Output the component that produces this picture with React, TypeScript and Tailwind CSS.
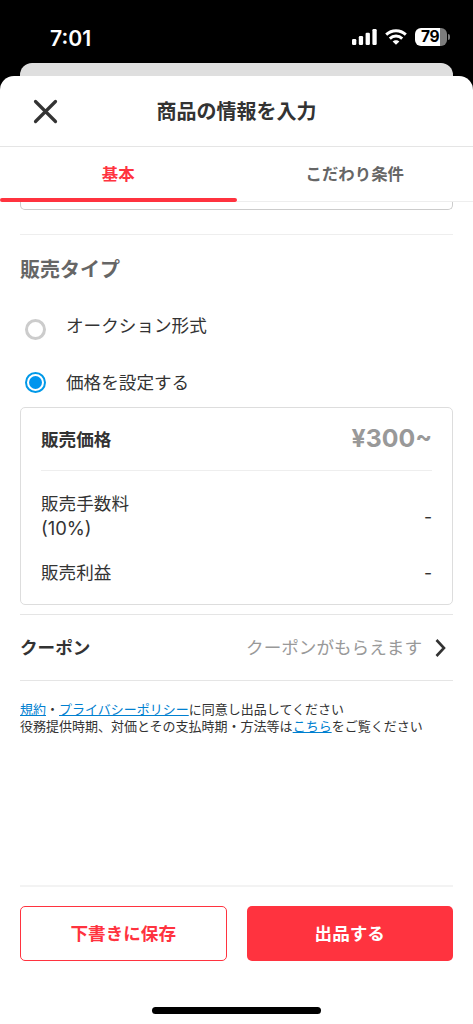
import React, { useState } from 'react';

type SaleType = 'auction' | 'fixed';

interface RadioProps {
  label: string;
  checked: boolean;
  onSelect: () => void;
  labelClass?: string;
}

function StatusBar() {
  return (
    <div className="flex h-[63px] items-center justify-between pl-[50px] pr-[23px] pt-[11px] text-white">
      <span className="pt-0.5 font-[Inter] text-[21.2px] font-semibold leading-6">7:01</span>
      <div className="flex items-center">
        <svg width="25" height="16" viewBox="0 0 25 16" fill="currentColor">
          <rect x="0" y="10" width="4.3" height="6" rx="1.2" />
          <rect x="6.8" y="7" width="4.3" height="9" rx="1.2" />
          <rect x="13.6" y="3.7" width="4.3" height="12.3" rx="1.2" />
          <rect x="20.4" y="0" width="4.3" height="16" rx="1.2" />
        </svg>
        <svg className="ml-2" width="22" height="16" viewBox="0 0 22 16" fill="none" stroke="currentColor" strokeWidth="2.9">
          <path d="M1.2 5.6C6.7 .4 15.3 .4 20.8 5.6" />
          <path d="M4.8 9.6C8.3 6.2 13.7 6.2 17.2 9.6" />
          <path d="M11 15.8L7.6 12.6C9.5 10.8 12.500 10.8 14.4 12.6Z" fill="currentColor" stroke="none" />
        </svg>
        <div className="ml-2 flex h-[18px] w-8 items-center justify-center rounded-[6px] bg-linear-to-r from-white from-78% to-[#7d7d7d] to-78%">
          <span className="pr-0.5 font-[Inter] text-[15.5px] font-bold leading-none tracking-[-0.5px] text-black">79</span>
        </div>
        <span className="ml-px h-[6px] w-[2px] rounded-r-full bg-[#7d7d7d]" />
      </div>
    </div>
  );
}

function Radio({ label, checked, onSelect, labelClass = '' }: RadioProps) {
  return (
    <button type="button" onClick={onSelect} className="flex h-6 w-full items-center gap-5 pl-[5px] text-left">
      <span
        className={`flex size-[21px] shrink-0 items-center justify-center rounded-full border-solid ${
          checked ? 'border-2 border-[#0099e8]' : 'border-3 border-[#cccccc]'
        }`}
      >
        {checked && <span className="size-[13px] rounded-full bg-[#0095ee]" />}
      </span>
      <span className={`text-[17.6px] leading-6 ${labelClass}`}>{label}</span>
    </button>
  );
}

export default function App() {
  const [tab, setTab] = useState<'basic' | 'detail'>('basic');
  const [saleType, setSaleType] = useState<SaleType>('fixed');

  return (
    <div className="flex h-[1024px] w-[473px] flex-col overflow-hidden bg-black font-[Inter,'Noto_Sans_CJK_JP',sans-serif] text-[#333333]">
      <StatusBar />
      <div className="mx-5 h-[13px] shrink-0 rounded-t-[12px] bg-[#dfdfdf]" />

      <div className="flex min-h-0 flex-1 flex-col rounded-t-[14px] bg-white">
        <header className="grid h-[71px] shrink-0 grid-cols-[90px_1fr_90px] items-center border-b border-[#e5e5e5]">
          <button type="button" className="pl-[33px]">
            <svg width="25" height="25" viewBox="0 0 25 25" fill="none" stroke="#333333" strokeWidth="3.2" strokeLinecap="round">
              <path d="M2.5 2.5L22.5 22.5M22.5 2.5L2.5 22.5" />
            </svg>
          </button>
          <h1 className="pt-0.5 text-center text-[20px] font-bold">商品の情報を入力</h1>
        </header>

        <div className="grid h-[55px] shrink-0 grid-cols-2">
          <button
            type="button"
            onClick={() => setTab('basic')}
            className={`flex flex-col text-[16.4px] font-bold ${tab === 'basic' ? 'text-[#ff333f]' : 'text-[#666666]'}`}
          >
            <span className="flex flex-1 items-center self-center pt-1">基本</span>
            <span className={tab === 'basic' ? 'h-1 w-full rounded-full bg-[#ff333f]' : 'h-px w-full bg-[#eeeeee]'} />
          </button>
          <button
            type="button"
            onClick={() => setTab('detail')}
            className={`flex flex-col text-[16.4px] font-bold ${tab === 'detail' ? 'text-[#ff333f]' : 'text-[#666666]'}`}
          >
            <span className="flex flex-1 items-center self-center pt-px">こだわり条件</span>
            <span className={tab === 'detail' ? 'h-1 w-full rounded-full bg-[#ff333f]' : 'h-px w-full bg-[#eeeeee]'} />
          </button>
        </div>

        <main className="flex min-h-0 flex-1 flex-col px-5">
          <div className="h-2 shrink-0 rounded-b-[5px] border border-t-0 border-[#cccccc]" />

          <section className="mt-6 border-t border-[#eeeeee] pt-[21px]">
            <h2 className="text-[20px] font-bold leading-7 text-[#666666]">販売タイプ</h2>
            <div className="mt-[33px] flex flex-col gap-[29px]">
              <Radio
                label="オークション形式"
                checked={saleType === 'auction'}
                onSelect={() => setSaleType('auction')}
                labelClass="pb-1.5"
              />
              <Radio
                label="価格を設定する"
                checked={saleType === 'fixed'}
                onSelect={() => setSaleType('fixed')}
                labelClass="pt-0.5"
              />
            </div>
          </section>

          <section className="mt-[13px] h-[198px] shrink-0 rounded-[5px] border border-[#dddddd] px-5 text-[17.6px]">
            <div className="flex h-[63px] items-center justify-between border-b border-[#eeeeee]">
              <span className="pt-0.5 font-bold">販売価格</span>
              <span className="text-[24.8px] font-bold text-[#999999]">¥300~</span>
            </div>
            <div className="mt-[21px] flex items-center justify-between leading-6">
              <span>
                販売手数料
                <br />
                <span className="text-[18.4px]">(10%)</span>
              </span>
              <span>-</span>
            </div>
            <div className="mt-5 flex items-center justify-between leading-6">
              <span>販売利益</span>
              <span>-</span>
            </div>
          </section>

          <button
            type="button"
            className="mt-[9px] flex h-[67px] shrink-0 items-center border-y border-[#e5e5e5] text-[17.6px]"
          >
            <span className="pt-0.5 font-bold">クーポン</span>
            <span className="ml-auto pt-0.5 text-[#999999]">クーポンがもらえます</span>
            <svg className="ml-[13px] mr-[7px]" width="11" height="18" viewBox="0 0 11 18" fill="none" stroke="#333333" strokeWidth="2.6">
              <path d="M1.5 1L9 9L1.5 17" />
            </svg>
          </button>

          <p className="mt-5 whitespace-nowrap text-[13px] leading-[17px]">
            <a className="text-[#0080d0] underline">規約</a>・
            <a className="text-[#0080d0] underline">プライバシーポリシー</a>に同意し出品してください
            <br />
            役務提供時期、対価とその支払時期・方法等は<a className="text-[#0080d0] underline">こちら</a>をご覧ください
          </p>
        </main>

        <footer className="mx-5 h-[139px] shrink-0 border-t-2 border-[#f3f3f3] pt-[19px]">
          <div className="grid grid-cols-2 gap-5 text-[17.6px] font-bold">
            <button type="button" className="h-[55px] rounded-[5px] border border-[#ff333f] pt-0.5 text-[#ff333f]">
              下書きに保存
            </button>
            <button type="button" className="h-[55px] rounded-[5px] bg-[#ff333f] pt-0.5 text-white">
              出品する
            </button>
          </div>
          <div className="mx-auto mt-[46px] h-[7px] w-[169px] rounded-full bg-black" />
        </footer>
      </div>
    </div>
  );
}
